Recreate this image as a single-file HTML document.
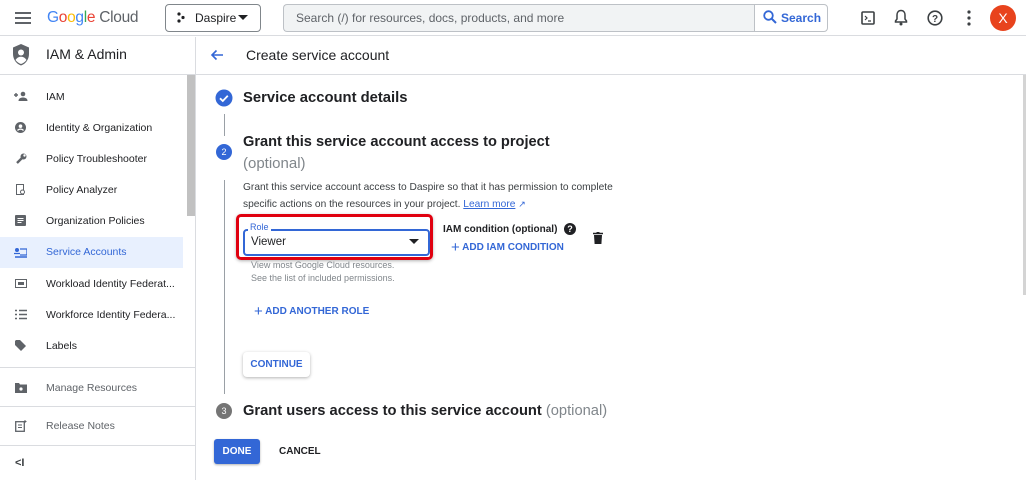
<!DOCTYPE html>
<html><head><style>
*{margin:0;padding:0;box-sizing:border-box}
body{width:1026px;height:480px;overflow:hidden;font-family:"Liberation Sans",Arial,sans-serif;background:#fff;position:relative;color:#202124}
.a{position:absolute;white-space:nowrap}
.nav{font-size:10.5px;color:#202124}
.blue{color:#3367d6}
</style></head><body>
<div class="a" style="left:0;top:0;width:1026px;height:36px;border-bottom:1px solid #dadce0"></div>
<svg class="a" style="left:15px;top:12px" width="16" height="12"><rect y="0" width="16" height="2" fill="#5f6368"/><rect y="5" width="16" height="2" fill="#5f6368"/><rect y="10" width="16" height="2" fill="#5f6368"/></svg>
<div class="a" style="left:47px;top:9px;font-size:15.5px;letter-spacing:-0.3px"><span style="color:#4285f4">G</span><span style="color:#ea4335">o</span><span style="color:#fbbc05">o</span><span style="color:#4285f4">g</span><span style="color:#34a853">l</span><span style="color:#ea4335">e</span> <span style="color:#5f6368">Cloud</span></div>
<div class="a" style="left:165px;top:4px;width:96px;height:28px;border:1px solid #80868b;border-radius:4px"></div>
<svg class="a" style="left:176px;top:12px" width="10" height="11"><circle cx="3" cy="2" r="1.6" fill="#202124"/><circle cx="3" cy="9" r="1.6" fill="#202124"/><circle cx="7" cy="5.5" r="1.6" fill="#202124"/></svg>
<div class="a" style="left:195px;top:11px;font-size:12px">Daspire</div>
<svg class="a" style="left:238px;top:15px" width="10" height="6"><path d="M0 0h10L5 5z" fill="#202124"/></svg>
<div class="a" style="left:283px;top:4px;width:471px;height:28px;border:1px solid #bdc1c6;border-right:none;border-radius:4px 0 0 4px;background:#f1f3f4"></div>
<div class="a" style="left:296px;top:11px;font-size:12px;color:#5f6368">Search (/) for resources, docs, products, and more</div>
<div class="a" style="left:754px;top:4px;width:74px;height:28px;border:1px solid #bdc1c6;border-radius:0 4px 4px 0"></div>
<svg class="a" style="left:763px;top:10px" width="14" height="14"><circle cx="5.5" cy="5.5" r="4.3" stroke="#3367d6" stroke-width="1.8" fill="none"/><path d="M8.5 8.5L13 13" stroke="#3367d6" stroke-width="2"/></svg>
<div class="a" style="left:781px;top:11px;font-size:12px;font-weight:bold;color:#3367d6">Search</div>
<svg class="a" style="left:861px;top:11px" width="14" height="14"><rect x="1" y="1" width="12" height="12" rx="1" fill="none" stroke="#3c4043" stroke-width="1.6"/><path d="M4 5l2 2-2 2M7 10h3" stroke="#3c4043" stroke-width="1.2" fill="none"/></svg>
<svg class="a" style="left:894px;top:9px" width="14" height="17"><path d="M7 1.5c-2.6 0-4 2-4 4.5v4L1.5 12v1h11v-1L11 10V6c0-2.5-1.4-4.5-4-4.5z" fill="none" stroke="#3c4043" stroke-width="1.5"/><circle cx="7" cy="15" r="1.5" fill="#3c4043"/></svg>
<svg class="a" style="left:927px;top:10px" width="16" height="16"><circle cx="8" cy="8" r="6.8" fill="none" stroke="#3c4043" stroke-width="1.6"/><text x="8" y="12" font-size="10" font-weight="bold" text-anchor="middle" fill="#3c4043" font-family="Liberation Sans">?</text></svg>
<svg class="a" style="left:967px;top:10px" width="4" height="16"><circle cx="2" cy="2" r="1.6" fill="#3c4043"/><circle cx="2" cy="8" r="1.6" fill="#3c4043"/><circle cx="2" cy="14" r="1.6" fill="#3c4043"/></svg>
<div class="a" style="left:990px;top:5px;width:26px;height:26px;border-radius:50%;background:#e8431d;color:#fff;font-size:14px;text-align:center;line-height:26px">X</div>

<div class="a" style="left:195px;top:37px;width:1px;height:443px;background:#dadce0"></div>
<div class="a" style="left:0;top:74px;width:1026px;height:1px;background:#dadce0"></div>
<svg class="a" style="left:11px;top:43px" width="20" height="24"><path d="M10 1L2 4.5v6.5c0 5.5 3.5 10 8 11.5 4.5-1.5 8-6 8-11.5V4.5z" fill="#5f6368"/><circle cx="10" cy="9.5" r="3" fill="#fff"/><path d="M4.5 17c1.5-2.5 3.5-3.3 5.5-3.3s4 .8 5.5 3.3c-1.5 2-3.5 3.3-5.5 4-2-.7-4-2-5.5-4z" fill="#fff"/></svg>
<div class="a" style="left:46px;top:46px;font-size:14px">IAM &amp; Admin</div>
<div class="a" style="left:187px;top:75px;width:8px;height:141px;background:#c1c1c1"></div>
<div class="a" style="left:0;top:237px;width:183px;height:31px;background:#e8f0fe"></div>
<div class="a nav" style="left:46px;top:91px">IAM</div>
<div class="a nav" style="left:46px;top:122px">Identity &amp; Organization</div>
<div class="a nav" style="left:46px;top:153px">Policy Troubleshooter</div>
<div class="a nav" style="left:46px;top:184px">Policy Analyzer</div>
<div class="a nav" style="left:46px;top:215px">Organization Policies</div>
<div class="a nav" style="left:46px;top:246px;color:#3367d6">Service Accounts</div>
<div class="a nav" style="left:46px;top:278px">Workload Identity Federat...</div>
<div class="a nav" style="left:46px;top:309px">Workforce Identity Federa...</div>
<div class="a nav" style="left:46px;top:340px">Labels</div>
<div class="a" style="left:0;top:367px;width:195px;height:1px;background:#dadce0"></div>
<div class="a nav" style="left:46px;top:382px;color:#5f6368">Manage Resources</div>
<div class="a" style="left:0;top:406px;width:195px;height:1px;background:#dadce0"></div>
<div class="a nav" style="left:46px;top:420px;color:#5f6368">Release Notes</div>
<div class="a" style="left:0;top:445px;width:195px;height:1px;background:#dadce0"></div>
<div class="a" style="left:15px;top:457px;font-size:11px;font-weight:bold;color:#3c4043">&lt;I</div>
<svg class="a" style="left:14px;top:91px" width="14" height="10"><path d="M0 4h4M2 2v4" stroke="#5f6368" stroke-width="1.4"/><circle cx="9" cy="3" r="2.3" fill="#5f6368"/><path d="M4.5 10c0-2.5 2-3.5 4.5-3.5s4.5 1 4.5 3.5z" fill="#5f6368"/></svg>
<svg class="a" style="left:15px;top:122px" width="11" height="11"><circle cx="5.5" cy="5.5" r="5.5" fill="#5f6368"/><circle cx="5.5" cy="4.2" r="1.8" fill="#fff"/><path d="M2.5 8.5c1.5-1.8 4.5-1.8 6 0" stroke="#fff" stroke-width="1.3" fill="none"/></svg>
<svg class="a" style="left:15px;top:153px" width="12" height="12"><path d="M2 10l5-5" stroke="#5f6368" stroke-width="2.4"/><circle cx="8.5" cy="3.5" r="3" fill="#5f6368"/><circle cx="9.5" cy="2.5" r="1.2" fill="#fff"/></svg>
<svg class="a" style="left:16px;top:184px" width="10" height="12"><rect x="0.5" y="0.5" width="7" height="10" fill="none" stroke="#5f6368"/><circle cx="6.5" cy="8" r="2" fill="#fff" stroke="#5f6368"/></svg>
<svg class="a" style="left:15px;top:215px" width="11" height="11"><rect width="11" height="11" rx="1" fill="#5f6368"/><path d="M2.5 3.5h6M2.5 5.5h6M2.5 7.5h4" stroke="#fff"/></svg>
<svg class="a" style="left:14px;top:247px" width="13" height="11"><circle cx="3" cy="3" r="2" fill="#3367d6"/><path d="M0 6.5h6M6 2h7v6H6" stroke="#3367d6" stroke-width="1.3" fill="none"/><path d="M1 10h12" stroke="#3367d6" stroke-width="1.5"/></svg>
<svg class="a" style="left:15px;top:279px" width="12" height="9"><rect x="0.5" y="0.5" width="11" height="8" fill="none" stroke="#5f6368"/><rect x="3" y="3" width="6" height="3" fill="#5f6368"/></svg>
<svg class="a" style="left:15px;top:309px" width="12" height="11"><path d="M0 1.5h2M4 1.5h8M0 5.5h2M4 5.5h8M0 9.5h2M4 9.5h8" stroke="#5f6368" stroke-width="1.6"/></svg>
<svg class="a" style="left:15px;top:340px" width="12" height="11"><path d="M0 1v4l6 6 5-5-6-6H1z" fill="#5f6368"/></svg>
<svg class="a" style="left:15px;top:382px" width="12" height="11"><path d="M0 1h4l1 1.5h7V11H0z" fill="#5f6368"/><circle cx="6" cy="7" r="1.6" fill="#fff"/></svg>
<svg class="a" style="left:15px;top:420px" width="12" height="12"><rect x="0.7" y="1.7" width="8.6" height="9.6" fill="none" stroke="#5f6368" stroke-width="1.3"/><path d="M3 5h4M3 7.5h4" stroke="#5f6368"/><path d="M10 0v3M8.5 1.5h3" stroke="#5f6368"/></svg>

<svg class="a" style="left:210px;top:49px" width="14" height="12"><path d="M13 6H2M6.5 1.5L2 6l4.5 4.5" stroke="#3367d6" stroke-width="1.6" fill="none"/></svg>
<div class="a" style="left:246px;top:47px;font-size:14px">Create service account</div>
<div class="a" style="left:1023px;top:75px;width:3px;height:220px;background:#d4d4d4"></div>

<svg class="a" style="left:215px;top:89px" width="18" height="18"><circle cx="9" cy="9" r="8.5" fill="#3367d6"/><path d="M5 9.3l2.8 2.7 5-5.2" stroke="#fff" stroke-width="1.8" fill="none"/></svg>
<div class="a" style="left:243px;top:90px;font-size:14.8px;font-weight:bold;color:#202124">Service account details</div>
<div class="a" style="left:224px;top:114px;width:1px;height:22px;background:#9aa0a6"></div>
<div class="a" style="left:216px;top:144px;width:16px;height:16px;border-radius:50%;background:#3367d6;color:#fff;font-size:9px;text-align:center;line-height:16px">2</div>
<div class="a" style="left:243px;top:134px;font-size:14.6px;font-weight:bold">Grant this service account access to project</div>
<div class="a" style="left:243px;top:155px;font-size:15px;color:#80868b">(optional)</div>
<div class="a" style="left:224px;top:180px;width:1px;height:214px;background:#9aa0a6"></div>
<div class="a" style="left:243px;top:180px;font-size:10.2px;line-height:16px;color:#3c4043">Grant this service account access to Daspire so that it has permission to complete<br>specific actions on the resources in your project. <span style="color:#3367d6;text-decoration:underline">Learn more</span> <span style="color:#3367d6;font-size:9px">↗</span></div>

<div class="a" style="left:236px;top:214px;width:197px;height:46px;border:3px solid #e0000f;border-radius:5px;box-shadow:0 1px 3px rgba(0,0,0,.3)"></div>
<div class="a" style="left:243px;top:229px;width:187px;height:27px;border:2px solid #3367d6;border-radius:4px"></div>
<div class="a" style="left:248px;top:222px;padding:0 2px;background:#fff;font-size:9px;color:#3367d6">Role</div>
<div class="a" style="left:251px;top:236px;font-size:11.5px">Viewer</div>
<svg class="a" style="left:409px;top:239px" width="10" height="5"><path d="M0 0h10L5 5z" fill="#202124"/></svg>
<div class="a" style="left:251px;top:259px;font-size:9px;line-height:13px;color:#80868b">View most Google Cloud resources.<br>See the list of included permissions.</div>
<div class="a" style="left:443px;top:224px;font-size:10px;font-weight:bold">IAM condition (optional)</div>
<div class="a" style="left:564px;top:223px;width:12px;height:12px;border-radius:50%;background:#202124;color:#fff;font-size:9px;font-weight:bold;text-align:center;line-height:12px">?</div>
<div class="a" style="left:451px;top:239px;font-size:10px;font-weight:bold;color:#3367d6"><span style="font-size:15px;font-weight:normal;vertical-align:-2px">+</span> ADD IAM CONDITION</div>
<svg class="a" style="left:593px;top:232px" width="10" height="12"><path d="M0 1.5h10M3.5 0h3" stroke="#202124" stroke-width="1.5"/><path d="M1 3h8l-.6 9H1.6z" fill="#202124"/></svg>
<div class="a" style="left:254px;top:303px;font-size:10px;font-weight:bold;color:#3367d6"><span style="font-size:15px;font-weight:normal;vertical-align:-2px">+</span> ADD ANOTHER ROLE</div>

<div class="a" style="left:243px;top:352px;width:67px;height:25px;border-radius:4px;background:#fff;box-shadow:0 1px 3px rgba(0,0,0,.3);font-size:10px;font-weight:bold;color:#3367d6;text-align:center;line-height:25px">CONTINUE</div>

<div class="a" style="left:216px;top:403px;width:16px;height:16px;border-radius:50%;background:#757575;color:#fff;font-size:9px;text-align:center;line-height:16px">3</div>
<div class="a" style="left:243px;top:403px;font-size:14.7px;font-weight:bold">Grant users access to this service account <span style="color:#80868b;font-weight:normal">(optional)</span></div>

<div class="a" style="left:214px;top:439px;width:46px;height:25px;border-radius:3px;background:#3367d6;color:#fff;font-size:10px;font-weight:bold;text-align:center;line-height:25px;box-shadow:0 1px 2px rgba(0,0,0,.3)">DONE</div>
<div class="a" style="left:279px;top:446px;font-size:10px;font-weight:bold;color:#202124">CANCEL</div>
</body></html>
